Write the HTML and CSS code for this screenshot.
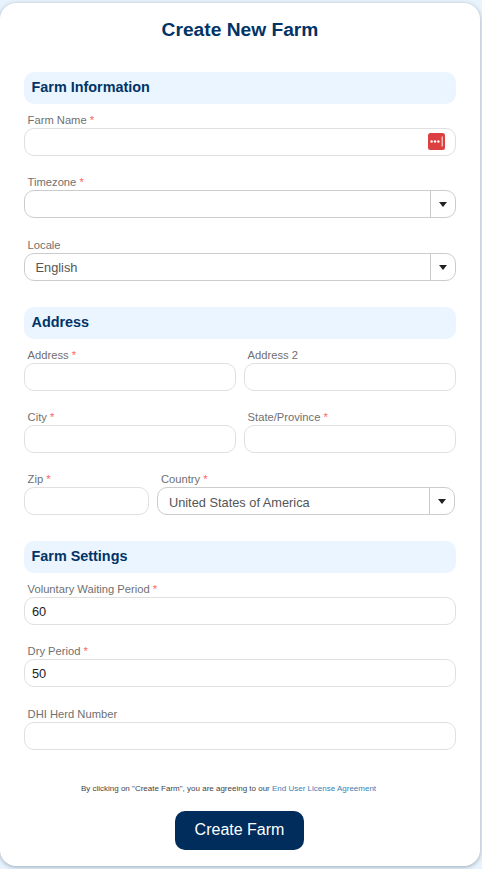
FILE: index.html
```html
<!DOCTYPE html>
<html lang="en">
<head>
  <meta charset="UTF-8">
  <title>Create New Farm</title>
  <link rel="stylesheet" href="styles.css">
</head>
<body>
  <form class="card">
    <h1>Create New Farm</h1>

    <section class="section">
      <h2>Farm Information</h2>
      <div class="field">
        <label>Farm Name <span class="req">*</span></label>
        <div class="input-wrap">
          <input type="text">
          <svg class="pw-icon" width="17" height="17" viewBox="0 0 17 17">
            <rect width="17" height="17" rx="2.5" fill="#dd4040"/>
            <circle cx="3.6" cy="8.5" r="1.2" fill="#fff"/>
            <circle cx="7" cy="8.5" r="1.2" fill="#fff"/>
            <circle cx="10.4" cy="8.5" r="1.2" fill="#fff"/>
            <rect x="13.6" y="3.5" width="1.2" height="10" fill="#f6d5d4"/>
          </svg>
        </div>
      </div>
      <div class="field">
        <label>Timezone <span class="req">*</span></label>
        <div class="combo">
          <input type="text">
          <button type="button" class="combo-btn"><i class="caret"></i></button>
        </div>
      </div>
      <div class="field">
        <label>Locale</label>
        <div class="combo">
          <input type="text" value="English">
          <button type="button" class="combo-btn"><i class="caret"></i></button>
        </div>
      </div>
    </section>

    <section class="section">
      <h2>Address</h2>
      <div class="row row-half">
        <div class="field">
          <label>Address <span class="req">*</span></label>
          <input type="text">
        </div>
        <div class="field">
          <label>Address 2</label>
          <input type="text">
        </div>
      </div>
      <div class="row row-half">
        <div class="field">
          <label>City <span class="req">*</span></label>
          <input type="text">
        </div>
        <div class="field">
          <label>State/Province <span class="req">*</span></label>
          <input type="text">
        </div>
      </div>
      <div class="row row-zip">
        <div class="field">
          <label>Zip <span class="req">*</span></label>
          <input type="text">
        </div>
        <div class="field">
          <label>Country <span class="req">*</span></label>
          <div class="combo">
            <input type="text" value="United States of America">
            <button type="button" class="combo-btn"><i class="caret"></i></button>
          </div>
        </div>
      </div>
    </section>

    <section class="section">
      <h2>Farm Settings</h2>
      <div class="field">
        <label>Voluntary Waiting Period <span class="req">*</span></label>
        <input type="text" class="num" value="60">
      </div>
      <div class="field">
        <label>Dry Period <span class="req">*</span></label>
        <input type="text" class="num" value="50">
      </div>
      <div class="field">
        <label>DHI Herd Number</label>
        <input type="text" class="num">
      </div>
    </section>

    <p class="eula">By clicking on "Create Farm", you are agreeing to our <a href="#">End User License Agreement</a></p>
    <button type="button" class="submit">Create Farm</button>
  </form>
</body>
</html>
```

FILE: styles.css
```css
* {
  box-sizing: border-box;
}

body {
  font-family: "Liberation Sans", Arial, sans-serif;
  margin: 0;
  padding: 3px 2px 3px 0;
  background: #e8f3fd;
}

.card {
  background: #fff;
  border-radius: 16px;
  height: 863px;
  padding: 15px 24px 0;
  display: flex;
  flex-direction: column;
  box-shadow: 0 1px 4px rgba(60, 80, 100, 0.45);
}

h1 {
  margin: 0 0 30px;
  height: 24px;
  line-height: 24px;
  font-size: 19.2px;
  font-weight: bold;
  text-align: center;
  color: #003366;
}

.section {
  margin-bottom: 7.4px;
}

.section:first-of-type {
  margin-bottom: 7.8px;
}

h2 {
  margin: 0 0 8px;
  height: 32px;
  line-height: 31px;
  padding-left: 7.5px;
  font-size: 14.4px;
  font-weight: bold;
  color: #003366;
  background: #ebf5ff;
  border-radius: 10px;
}

.field {
  margin-bottom: 18.3px;
  min-width: 0;
}

label {
  display: block;
  height: 16px;
  line-height: 16px;
  padding-left: 3.6px;
  font-size: 11.2px;
  color: #707070;
}

.req {
  color: #f66;
}

input {
  display: block;
  width: 100%;
  height: 28px;
  padding: 0 10.5px;
  font-family: inherit;
  font-size: 12.8px;
  color: #555;
  background: #fff;
  border: 1px solid #e0e0e0;
  border-radius: 10px;
  outline: none;
}

.num {
  padding: 1px 7px 0;
  color: #222;
}

.input-wrap {
  position: relative;
}

.pw-icon {
  position: absolute;
  top: 5px;
  right: 11px;
}

.combo {
  display: flex;
  height: 28px;
  border: 1px solid #ccc;
  border-radius: 10px;
}

.combo input {
  flex: 1;
  min-width: 0;
  height: 26px;
  padding-top: 2px;
  border: none;
  background: transparent;
}

.combo-btn {
  width: 25px;
  padding: 1px 0 0;
  display: flex;
  align-items: center;
  justify-content: center;
  background: none;
  border: none;
  border-left: 1px solid #ccc;
}

.caret {
  width: 0;
  height: 0;
  border-left: 4.5px solid transparent;
  border-right: 4.5px solid transparent;
  border-top: 5px solid #222;
}

.row {
  display: grid;
  gap: 8px;
}

.row-half {
  grid-template-columns: 1fr 1fr;
}

.row-zip {
  grid-template-columns: 125.4px 297.6px;
}

.eula {
  margin: 3.4px 0 0;
  padding-right: 23px;
  height: 20px;
  line-height: 20px;
  font-size: 8px;
  text-align: center;
  color: #444;
}

.eula a {
  color: #3a7fb5;
  text-decoration: none;
}

.submit {
  align-self: center;
  margin: 12px 1px 0 0;
  width: 129px;
  height: 39px;
  font-family: inherit;
  font-size: 16px;
  color: #fff;
  background: #002d5c;
  border: none;
  border-radius: 10px;
}
```
